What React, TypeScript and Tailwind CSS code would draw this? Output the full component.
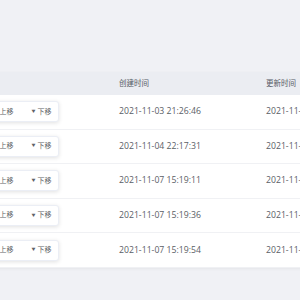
import React from 'react';

const rows = [
  { created: '2021-11-03 21:26:46', updated: '2021-11-03 21:26:46' },
  { created: '2021-11-04 22:17:31', updated: '2021-11-04 22:17:31' },
  { created: '2021-11-07 15:19:11', updated: '2021-11-07 15:19:11' },
  { created: '2021-11-07 15:19:36', updated: '2021-11-07 15:19:36' },
  { created: '2021-11-07 15:19:54', updated: '2021-11-07 15:19:54' },
];

const MoveButtons = () => (
  <div className="flex h-[21px] w-[75px] items-center rounded-[3px] border border-[#ebeef5] bg-white shadow-[0_1px_4px_rgba(0,0,0,0.12)] text-[7px] text-[#606266]">
    <div className="flex w-[38px] items-center justify-center gap-[2px]">
      <span className="text-[4px]">▲</span>
      <span>上移</span>
    </div>
    <div className="flex w-[37px] items-center justify-center gap-[2px] pl-[3px]">
      <span className="text-[4px]">▼</span>
      <span>下移</span>
    </div>
  </div>
);

const App = () => {
  return (
    <div
      className="h-[300px] w-[300px] overflow-hidden bg-[#f0f1f5]"
      style={{ fontFamily: '"Open Sans", "Noto Sans CJK SC", sans-serif' }}
    >
      <div className="h-[72px]" />
      <div className="ml-[-16px] w-[400px] shadow-[0_1px_3px_rgba(0,0,0,0.05)]">
        <div className="flex h-[23px] items-center bg-[#ebedf2] text-[7.5px] text-[#555a64]">
          <div className="w-[135px] shrink-0" />
          <div className="w-[147px] shrink-0">创建时间</div>
          <div className="shrink-0">更新时间</div>
        </div>
        {rows.map((row) => (
          <div
            key={row.created}
            className="flex h-[34.6px] items-center border-b border-[#f0f1f4] bg-white text-[8.7px] text-[#5a5e66]"
          >
            <div className="w-[135px] shrink-0">
              <MoveButtons />
            </div>
            <div className="w-[147px] shrink-0">{row.created}</div>
            <div className="shrink-0 whitespace-nowrap">{row.updated}</div>
          </div>
        ))}
      </div>
    </div>
  );
};

export default App;
